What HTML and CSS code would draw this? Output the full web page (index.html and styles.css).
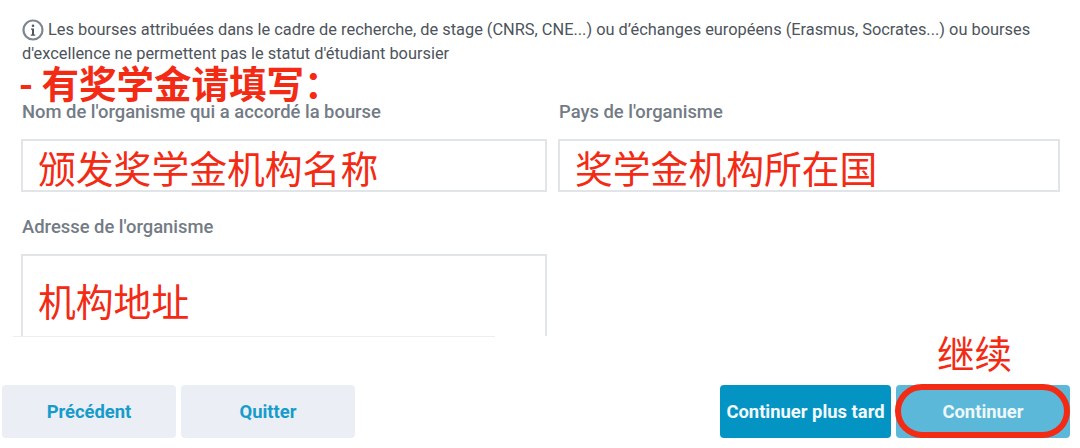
FILE: index.html
```html
<!DOCTYPE html>
<html lang="fr">
<head>
    <meta charset="UTF-8">
    <meta name="viewport" content="width=device-width, initial-scale=1.0">
    <title>Bourse</title>
    <link rel="stylesheet" href="styles.css">
</head>
<body>
    <div class="form-area">
        <p class="notice">
            <svg class="info-icon" width="22" height="22" viewBox="0 0 22 22">
                <circle cx="11" cy="11" r="9.5" fill="none" stroke="#7d8791" stroke-width="2.200"/>
                <circle cx="11" cy="6.8" r="1.3" fill="#4f5760"/>
                <path d="M9 9.6h3v6h1.2v1.1H8.800v-1.100H10v-4.900H9z" fill="#4f5760"/>
            </svg>
            Les bourses attribuées dans le cadre de recherche, de stage (CNRS, CNE...) ou d’échanges européens (Erasmus, Socrates...) ou bourses d'excellence ne permettent pas le statut d'étudiant boursier
        </p>
        <div class="note-heading">- 有奖学金请填写：</div>
        <div class="field-grid">
            <div class="field">
                <label class="field-label">Nom de l'organisme qui a accordé la bourse</label>
                <div class="field-box">颁发奖学金机构名称</div>
            </div>
            <div class="field">
                <label class="field-label">Pays de l'organisme</label>
                <div class="field-box">奖学金机构所在国</div>
            </div>
            <div class="field">
                <label class="field-label">Adresse de l'organisme</label>
                <div class="field-box field-box-tall">机构地址</div>
            </div>
        </div>
    </div>
    <div class="footer-rule"></div>

    <div class="continue-note">继续</div>
    <div class="button-row">
        <div class="button-group">
            <button class="button button-light">Précédent</button>
            <button class="button button-light">Quitter</button>
        </div>
        <div class="button-group">
            <button class="button button-dark">Continuer plus tard</button>
            <button class="button button-pale">Continuer<span class="red-ring"></span></button>
        </div>
    </div>
</body>
</html>
```

FILE: styles.css
```css
body {
    margin: 0;
    height: 448px;
    overflow: hidden;
    background-color: #ffffff;
    font-family: Roboto, "Noto Sans CJK SC", sans-serif;
}

.form-area {
    height: 336px;
    overflow: hidden;
    padding: 18px 20px 0 21px;
    box-sizing: border-box;
}

.notice {
    margin: 0 0 0 1px;
    font-size: 16.370px;
    line-height: 24px;
    color: #4d545c;
}

.info-icon {
    vertical-align: -6px;
}

.note-heading {
    margin: -2px 0 0 -2px;
    height: 37px;
    font-family: "Noto Sans CJK SC", sans-serif;
    font-size: 37.500px;
    line-height: 36px;
    font-weight: 700;
    color: #f32a14;
}

.field-grid {
    display: grid;
    grid-template-columns: 526px 502px;
    column-gap: 11px;
    row-gap: 24px;
}

.field-label {
    display: block;
    height: 38px;
    padding-left: 1px;
    font-size: 18.400px;
    line-height: 22px;
    font-weight: 500;
    color: #737b85;
}

.field-box {
    height: 49px;
    padding-left: 15px;
    border: 2px solid #e2e5e7;
    font-family: "Noto Sans CJK SC", sans-serif;
    font-size: 37.800px;
    line-height: 52px;
    color: #f32a14;
}

.field-box-tall {
    height: 100px;
    line-height: 88px;
}

.footer-rule {
    width: 482px;
    height: 1px;
    margin-left: 13px;
    background-color: #eceeef;
}

.continue-note {
    margin: -8px 0 0 937px;
    height: 56px;
    font-family: "Noto Sans CJK SC", sans-serif;
    font-size: 37.500px;
    line-height: 46px;
    color: #f32a14;
}

.button-row {
    display: flex;
    justify-content: space-between;
    padding: 0 10px 0 2px;
}

.button-group {
    display: flex;
    gap: 5px;
}

.button {
    position: relative;
    width: 174px;
    height: 53px;
    padding: 0;
    border: none;
    border-radius: 4px;
    font-family: Roboto, sans-serif;
    font-size: 18.400px;
    font-weight: 700;
}

.button-light {
    background-color: #ebeef5;
    color: #169ccb;
}

.button-dark {
    width: 171px;
    background-color: #0494c4;
    color: #f2fafd;
}

.button-pale {
    background-color: #5cb8d9;
    color: #eef8fb;
}

.red-ring {
    position: absolute;
    inset: -1px 0 0 -1px;
    border: 6px solid #f32a14;
    border-radius: 28px;
}
```
